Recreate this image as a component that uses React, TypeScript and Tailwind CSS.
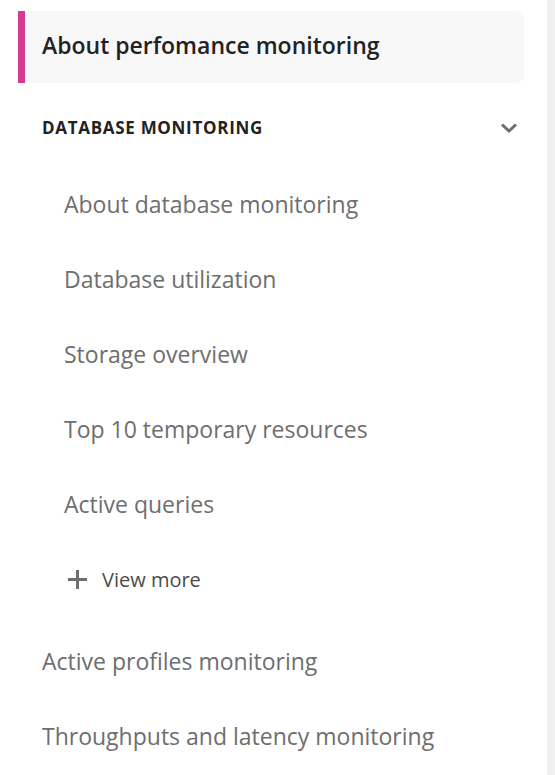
const subItems = [
  'About database monitoring',
  'Database utilization',
  'Storage overview',
  'Top 10 temporary resources',
  'Active queries',
];

const topItems = ['Active profiles monitoring', 'Throughputs and latency monitoring'];

export default function App() {
  return (
    <div className="flex h-[775px] w-[555px] bg-white font-['Open_Sans',sans-serif]">
      <nav className="flex-1 pl-[18px] pr-[23px] pt-[11px]">
        {/* Active item */}
        <div className="flex h-[72px] items-center rounded-r-lg border-l-[7px] border-[#d43c91] bg-[#f8f8f8] pb-[3px] pl-[17px]">
          <span className="text-[23px] font-semibold text-[#222]">About perfomance monitoring</span>
        </div>

        {/* Section */}
        <div className="mt-[29px] flex h-[32px] items-center justify-between pl-[24px] pr-[6px]">
          <span className="text-[17px] font-bold uppercase tracking-[0.7px] text-[#222]">Database monitoring</span>
          <svg width="18" height="12" viewBox="0 0 18 12" fill="none">
            <path d="M2 2.5l7 6.5 7-6.5" stroke="#6e6e6e" strokeWidth="3" />
          </svg>
        </div>

        <ul className="mt-[23px]">
          {subItems.map((item) => (
            <li key={item} className="flex h-[75px] items-center pl-[46px] text-[23px] text-[#6e6e6e]">
              {item}
            </li>
          ))}
          <li className="flex h-[75px] items-center gap-[15px] pl-[50px] text-[20px] text-[#4b4b4b]">
            <svg width="19" height="19" viewBox="0 0 19 19" fill="none">
              <path d="M9.5 0v19M0 9.5h19" stroke="#6e6e6e" strokeWidth="3" />
            </svg>
            View more
          </li>
        </ul>

        <ul className="mt-[7px]">
          {topItems.map((item) => (
            <li key={item} className="flex h-[75px] items-center pl-[24px] text-[23px] text-[#6e6e6e]">
              {item}
            </li>
          ))}
        </ul>
      </nav>
      <div className="w-[8px] bg-[#f0f0f0]" />
    </div>
  );
}
